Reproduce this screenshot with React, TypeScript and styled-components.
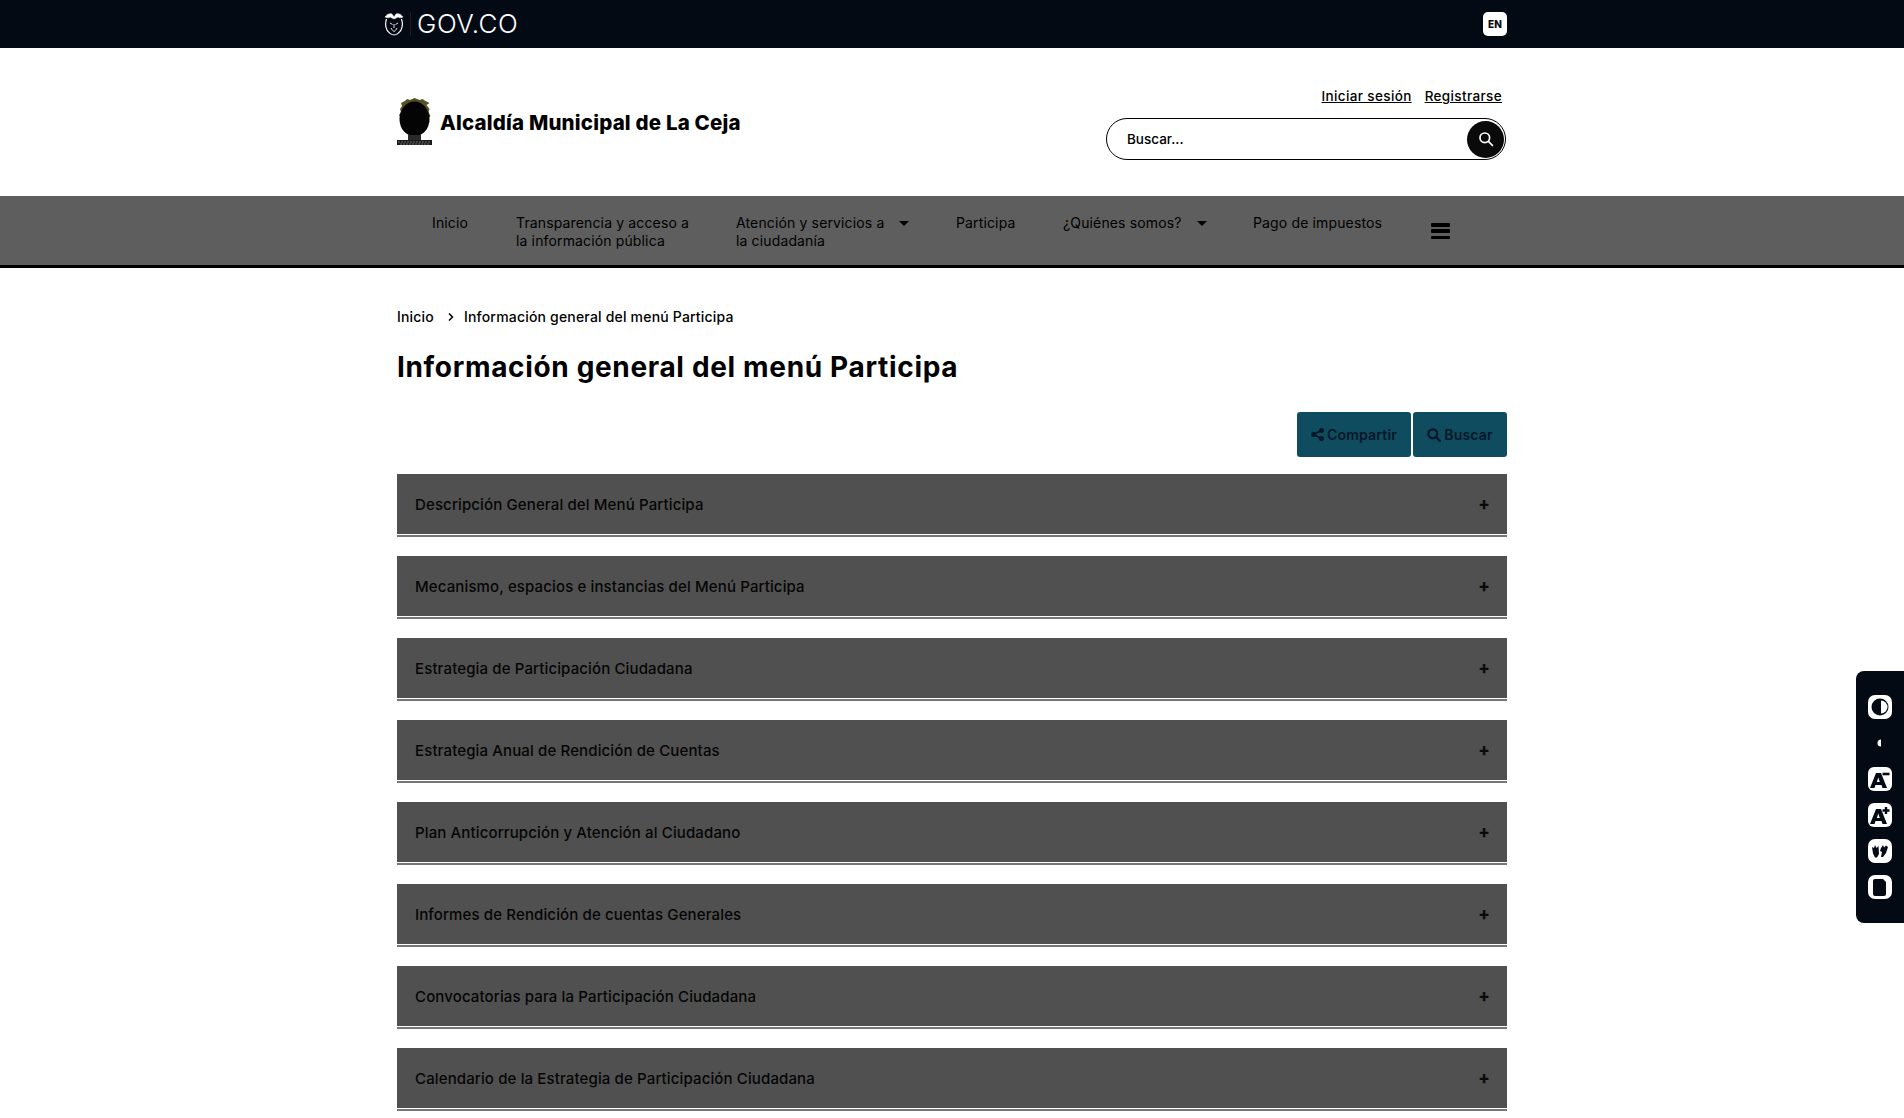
import React from "react";
import styled, { createGlobalStyle } from "styled-components";

const Global = createGlobalStyle`
  html, body { margin: 0; padding: 0; background: #fff; overflow: hidden; height: 1118px; }
  body { font-family: "Inter", "Liberation Sans", sans-serif; color: #000; }
  * { box-sizing: border-box; }
`;

const Page = styled.div`
  width: 1904px;
  height: 1118px;
  overflow: hidden;
`;

const TopBar = styled.div`
  height: 48px;
  background: #040a14;
`;

const TopInner = styled.div`
  width: 1110px;
  margin: 0 auto;
  height: 100%;
  display: flex;
  align-items: center;
  justify-content: space-between;
`;

const GovBrand = styled.div`
  display: flex;
  align-items: center;
  gap: 6px;
  margin-left: -13px;
`;

const GovDivider = styled.span`
  width: 1px;
  height: 24px;
  background: #2a161c;
`;

const GovText = styled.span`
  color: #fff;
  font-size: 26px;
  font-weight: 300;
  letter-spacing: 0.55px;
  line-height: 1;
`;

const LangBadge = styled.div`
  width: 24px;
  height: 24px;
  border-radius: 5px;
  background: #fff;
  color: #040a14;
  font-size: 10px;
  font-weight: 800;
  display: flex;
  align-items: center;
  justify-content: center;
`;

const Header = styled.header`
  width: 1110px;
  height: 148px;
  margin: 0 auto;
  display: flex;
  justify-content: space-between;
`;

const Brand = styled.div`
  display: flex;
  align-items: center;
  gap: 8px;
`;

const BrandName = styled.div`
  font-size: 20.5px;
  font-weight: 800;
  letter-spacing: 0.18px;
  color: #000;
`;

const HeaderRight = styled.div`
  width: 400px;
  margin-right: 1px;
  padding-top: 39px;
  display: flex;
  flex-direction: column;
  align-items: stretch;
`;

const AuthRow = styled.div`
  display: flex;
  justify-content: flex-end;
  gap: 13px;
  padding-right: 4px;
  height: 19px;
  margin-bottom: 12px;
`;

const AuthLink = styled.a`
  font-size: 13.5px;
  font-weight: 500;
  letter-spacing: 0.36px;
  color: #000;
  text-decoration: underline;
  line-height: 19px;
`;

const SearchBox = styled.div`
  height: 42px;
  border: 1.5px solid #000;
  border-radius: 21px;
  display: flex;
  align-items: center;
  justify-content: space-between;
  padding: 0 1px 0 20px;
  font-size: 13.5px;
  font-weight: 500;
`;

const SearchButton = styled.div`
  width: 37px;
  height: 37px;
  border-radius: 50%;
  background: #0a0a0a;
  display: flex;
  align-items: center;
  justify-content: center;
`;

const NavBar = styled.nav`
  height: 72px;
  background: #5e5e5e;
  border-bottom: 3px solid #000;
`;

const NavInner = styled.div`
  width: 1110px;
  margin: 0 auto;
  padding: 18px 0 0 35px;
  display: flex;
  align-items: flex-start;
  gap: 40px;
`;

const NavItem = styled.a<{ $w: number }>`
  width: ${(p) => p.$w}px;
  flex: none;
  font-size: 14px;
  line-height: 18px;
  letter-spacing: 0.14px;
  white-space: nowrap;
  color: #000;
  display: flex;
  align-items: flex-start;
  gap: 15px;
`;

const Caret = styled.span`
  flex: none;
  width: 0;
  height: 0;
  margin-top: 7px;
  border-left: 5px solid transparent;
  border-right: 5px solid transparent;
  border-top: 5px solid #000;
`;

const Burger = styled.div`
  width: 19px;
  height: 16px;
  margin-top: 9px;
  display: flex;
  flex-direction: column;
  justify-content: space-between;
`;

const BurgerLine = styled.span`
  height: 3.5px;
  border-radius: 1px;
  background: #000;
`;

const Main = styled.main`
  width: 1110px;
  margin: 0 auto;
`;

const Crumbs = styled.div`
  display: flex;
  align-items: center;
  padding-top: 39px;
  height: 58px;
  font-size: 14px;
  font-weight: 500;
  letter-spacing: 0.19px;
  line-height: 19px;
`;

const CrumbSep = styled.span`
  display: flex;
  margin: 0 9px 0 13px;
`;

const Title = styled.h1`
  margin: 21px 0 0 0;
  font-size: 28px;
  line-height: 40px;
  font-weight: 700;
  letter-spacing: 0.66px;
`;

const Actions = styled.div`
  display: flex;
  justify-content: flex-end;
  gap: 2px;
  margin-top: 25px;
`;

const ActionButton = styled.button<{ $w: number }>`
  width: ${(p) => p.$w}px;
  height: 45px;
  border: 0;
  border-radius: 3px;
  background: #0f4c60;
  color: #04172a;
  font: 600 14px "Inter", "Liberation Sans", sans-serif;
  letter-spacing: 0.2px;
  display: flex;
  align-items: center;
  justify-content: center;
  gap: 3px;
  padding: 0;
`;

const Accordion = styled.div`
  margin-top: 17px;
  display: flex;
  flex-direction: column;
  gap: 19px;
`;

const Row = styled.div`
  height: 63px;
  padding-bottom: 1px;
  border-bottom: 2px solid #757575;
`;

const RowHead = styled.div`
  height: 60px;
  background: #505050;
  display: flex;
  align-items: center;
  justify-content: space-between;
  padding: 0 17px 0 18px;
  font-size: 15px;
  font-weight: 500;
  letter-spacing: 0.13px;
  color: #050505;
`;

const Plus = styled.span`
  font-size: 17px;
  font-weight: 800;
  color: #0a0a0a;
`;

const SidePanel = styled.aside`
  position: fixed;
  right: 0;
  top: 671px;
  width: 48px;
  height: 252px;
  background: #040a14;
  border-radius: 8px 0 0 8px;
  display: flex;
  flex-direction: column;
  align-items: center;
  padding: 24px 0 0 0;
`;

const ToolIcon = styled.div<{ $gap?: number }>`
  width: 24px;
  height: 24px;
  margin-bottom: ${(p) => p.$gap ?? 12}px;
  display: flex;
  align-items: center;
  justify-content: center;
`;

const rows = [
  "Descripción General del Menú Participa",
  "Mecanismo, espacios e instancias del Menú Participa",
  "Estrategia de Participación Ciudadana",
  "Estrategia Anual de Rendición de Cuentas",
  "Plan Anticorrupción y Atención al Ciudadano",
  "Informes de Rendición de cuentas Generales",
  "Convocatorias para la Participación Ciudadana",
  "Calendario de la Estrategia de Participación Ciudadana",
];

const GovShield = () => (
  <svg width="20" height="24" viewBox="0 0 20 24" fill="none" stroke="#fff" strokeWidth="1.2">
    <path d="M2.500 7C1.500 10 1.500 15 3 18c1.500 3 5 5 7 5s5.500-2 7-5c1.500-3 1.500-8 .5-11" />
    <path d="M1 5c2-3 5-4 7-3l2 3 2-3c2-1 5 0 7 3-2 1-4 1-5 0l-4 2-4-2c-1 1-3 1-5 0Z" fill="#fff" strokeWidth=".5" />
    <path d="M6 11l2.500 1.500M14 11l-2.500 1.500M7 16c1 2 2 3 3 3.500 1-.5 2-1.500 3-3.500M10 12v4" strokeWidth=".9" />
  </svg>
);

const Crest = () => (
  <svg width="35" height="48" viewBox="0 0 35 48">
    <path d="M4 5 8 3l2-2 3 1 4.500-2 5 2 3-1 3 2 4 2-3 2 3 4-1 3 2 4-2 2 1 4-3 3-1 4-4 2H11l-3-2-2-4-3-3 1-4-2-3 2-3-1-3 2-3Z" fill="#55531f" />
    <ellipse cx="17.500" cy="21" rx="15" ry="17.500" fill="#040404" />
    <rect x="11" y="37" width="13" height="5" fill="#2a2a2a" />
    <rect x="0" y="42" width="35" height="5" fill="#1c1c1c" />
    <path d="M1 44h33M3 46h29" stroke="#8a8a8a" strokeWidth=".7" strokeDasharray="2 1" />
  </svg>
);

const SearchGlyph = () => (
  <svg width="16" height="16" viewBox="0 0 16 16" fill="none" stroke="#fff" strokeWidth="1.7">
    <circle cx="6.800" cy="6.800" r="4.800" />
    <path d="M10.400 10.400 14.500 14.500" strokeLinecap="round" />
  </svg>
);

const SmallSearch = () => (
  <svg width="14" height="14" viewBox="0 0 14 14" fill="none" stroke="#04172a" strokeWidth="2.400">
    <circle cx="5.800" cy="5.800" r="4.400" />
    <path d="M9 9 13 13" strokeLinecap="round" />
  </svg>
);

const ShareGlyph = () => (
  <svg width="13" height="13" viewBox="0 0 13 13" fill="#04172a" stroke="#04172a">
    <circle cx="2.700" cy="6.500" r="2.600" stroke="none" />
    <circle cx="10.500" cy="2.500" r="2.500" stroke="none" />
    <circle cx="10.500" cy="10.500" r="2.500" stroke="none" />
    <path d="M2.500 6.500 10.500 2.500M2.500 6.500l8 4" strokeWidth="1.800" />
  </svg>
);

const Chevron = () => (
  <svg width="8" height="10" viewBox="0 0 8 10" fill="none" stroke="#000" strokeWidth="1.500">
    <path d="M2 1.500 5.500 5 2 8.500" />
  </svg>
);

const ContrastIcon = () => (
  <svg width="24" height="24" viewBox="0 0 24 24">
    <rect x="0" y="0" width="24" height="24" rx="7" fill="#fff" />
    <circle cx="12" cy="12" r="8.500" fill="#040a14" />
    <path d="M13 5.500a6.500 6.500 0 0 1 0 13Z" fill="#fff" />
  </svg>
);

const SmallContrast = () => (
  <svg width="8" height="10" viewBox="0 0 8 10">
    <path d="M5 1.500a3.500 3.500 0 0 0 0 7Z" fill="#fff" />
  </svg>
);

const FontIcon = ({ plus }: { plus?: boolean }) => (
  <svg width="24" height="24" viewBox="0 0 24 24">
    <rect width="24" height="24" rx="6" fill="#fff" />
    <path d="M2 21 8 6h5l6 15h-4.500l-1-3H7.500l-1 3Zm6.800-6h3L10.300 10.500Z" fill="#040a14" fillRule="evenodd" />
    {plus ? (
      <path d="M18 4v7M14.500 7.500h7" stroke="#040a14" strokeWidth="2.400" />
    ) : (
      <path d="M14.500 7h7" stroke="#040a14" strokeWidth="2.600" />
    )}
  </svg>
);

const HandsIcon = () => (
  <svg width="24" height="24" viewBox="0 0 24 24">
    <rect width="24" height="24" rx="7" fill="#fff" />
    <path d="M4 8l2 1 1-3 1.500 3 2-2 .5 8-2 3.500H7l-2-4ZM13 9l2-3 1 2.500 2-2 2 1.500-2 6-3 4h-2l1-5-2-1Z" fill="#040a14" />
  </svg>
);

const PageIcon = () => (
  <svg width="24" height="24" viewBox="0 0 24 24">
    <rect width="24" height="24" rx="7" fill="#fff" />
    <path d="M7 4h8l3 3v12a2 2 0 0 1-2 2H7a2 2 0 0 1-2-2V6a2 2 0 0 1 2-2Z" fill="#040a14" />
  </svg>
);

export default function App() {
  return (
    <Page>
      <Global />
      <TopBar>
        <TopInner>
          <GovBrand>
            <GovShield />
            <GovDivider />
            <GovText>GOV.CO</GovText>
          </GovBrand>
          <LangBadge>EN</LangBadge>
        </TopInner>
      </TopBar>

      <Header>
        <Brand>
          <Crest />
          <BrandName>Alcaldía Municipal de La Ceja</BrandName>
        </Brand>
        <HeaderRight>
          <AuthRow>
            <AuthLink>Iniciar sesión</AuthLink>
            <AuthLink>Registrarse</AuthLink>
          </AuthRow>
          <SearchBox>
            Buscar...
            <SearchButton>
              <SearchGlyph />
            </SearchButton>
          </SearchBox>
        </HeaderRight>
      </Header>

      <NavBar>
        <NavInner>
          <NavItem $w={44}>Inicio</NavItem>
          <NavItem $w={180}>
            <span>
              Transparencia y acceso a
              <br />
              la información pública
            </span>
          </NavItem>
          <NavItem $w={180}>
            <span>
              Atención y servicios a
              <br />
              la ciudadanía
            </span>
            <Caret />
          </NavItem>
          <NavItem $w={67}>Participa</NavItem>
          <NavItem $w={150}>
            <span>¿Quiénes somos?</span>
            <Caret />
          </NavItem>
          <NavItem $w={138}>Pago de impuestos</NavItem>
          <Burger>
            <BurgerLine />
            <BurgerLine />
            <BurgerLine />
          </Burger>
        </NavInner>
      </NavBar>

      <Main>
        <Crumbs>
          Inicio
          <CrumbSep>
            <Chevron />
          </CrumbSep>
          Información general del menú Participa
        </Crumbs>
        <Title>Información general del menú Participa</Title>
        <Actions>
          <ActionButton $w={114}>
            <ShareGlyph />
            Compartir
          </ActionButton>
          <ActionButton $w={94}>
            <SmallSearch />
            Buscar
          </ActionButton>
        </Actions>
        <Accordion>
          {rows.map((r) => (
            <Row key={r}>
              <RowHead>
                {r}
                <Plus>+</Plus>
              </RowHead>
            </Row>
          ))}
        </Accordion>
      </Main>

      <SidePanel>
        <ToolIcon $gap={12}>
          <ContrastIcon />
        </ToolIcon>
        <ToolIcon $gap={12}>
          <SmallContrast />
        </ToolIcon>
        <ToolIcon $gap={12}>
          <FontIcon />
        </ToolIcon>
        <ToolIcon $gap={12}>
          <FontIcon plus />
        </ToolIcon>
        <ToolIcon $gap={12}>
          <HandsIcon />
        </ToolIcon>
        <ToolIcon $gap={0}>
          <PageIcon />
        </ToolIcon>
      </SidePanel>
    </Page>
  );
}
